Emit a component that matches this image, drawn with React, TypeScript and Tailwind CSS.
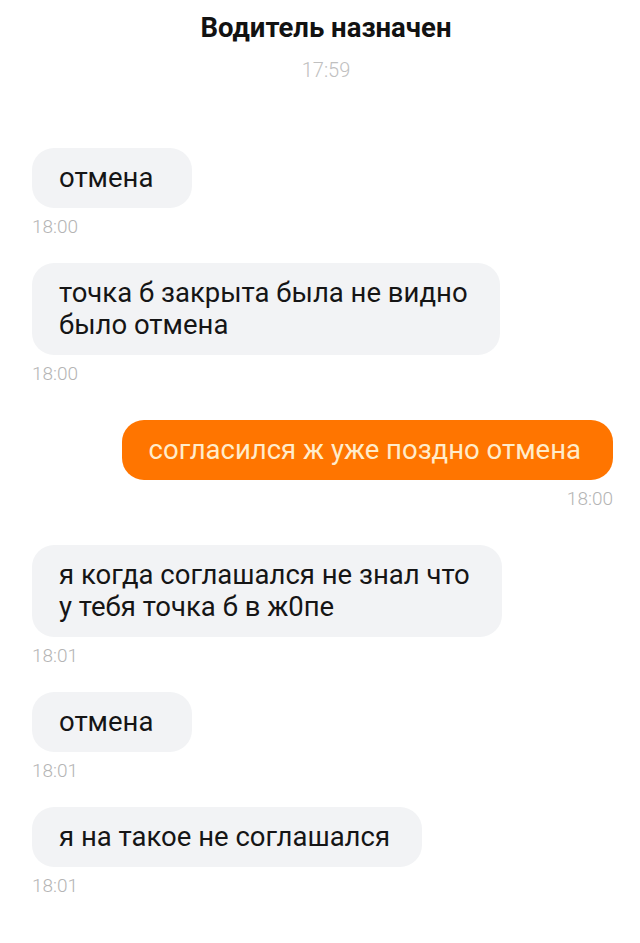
const font = "font-['Roboto','Noto_Sans',sans-serif]";

type Msg = {
  text: string[];
  time: string;
  mine?: boolean;
  gap: string;
};

const messages: Msg[] = [
  { text: ["отмена"], time: "18:00", gap: "mt-0" },
  { text: ["точка б закрыта была не видно", "было отмена"], time: "18:00", gap: "mt-[25px]" },
  { text: ["согласился ж уже поздно отмена"], time: "18:00", mine: true, gap: "mt-[35px]" },
  { text: ["я когда соглашался не знал что", "у тебя точка б в ж0пе"], time: "18:01", gap: "mt-[35px]" },
  { text: ["отмена"], time: "18:01", gap: "mt-[25px]" },
  { text: ["я на такое не соглашался"], time: "18:01", gap: "mt-[25px]" },
];

function Bubble({ m }: { m: Msg }) {
  return (
    <div className={`flex flex-col ${m.mine ? "items-end" : "items-start"} ${m.gap}`}>
      <div
        className={`min-w-[160px] rounded-[22px] py-[14px] pl-[27px] pr-[32px] text-[27.5px] leading-[32px] ${
          m.mine ? "bg-[#ff7500] text-[#ffeccb]" : "bg-[#f2f3f5] text-[#151515]"
        }`}
      >
        {m.text.map((line, i) => (
          <div key={i}>{line}</div>
        ))}
      </div>
      <div className="mt-[8px] text-[19px] leading-[22px] font-light text-[#b4b4b4]">{m.time}</div>
    </div>
  );
}

export default function App() {
  return (
    <div className={`${font} w-[640px] h-[943px] bg-white overflow-hidden`}>
      <div className="flex flex-col items-center pt-[12px] pl-[12px]">
        <div className="text-[27.5px] leading-[32px] font-bold text-[#121212]">Водитель назначен</div>
        <div className="mt-[15px] text-[20px] leading-[22px] font-light text-[#c0c0c0]">17:59</div>
      </div>
      <div className="flex flex-col pl-[32px] pr-[27px] pt-[67px]">
        {messages.map((m, i) => (
          <Bubble key={i} m={m} />
        ))}
      </div>
    </div>
  );
}
